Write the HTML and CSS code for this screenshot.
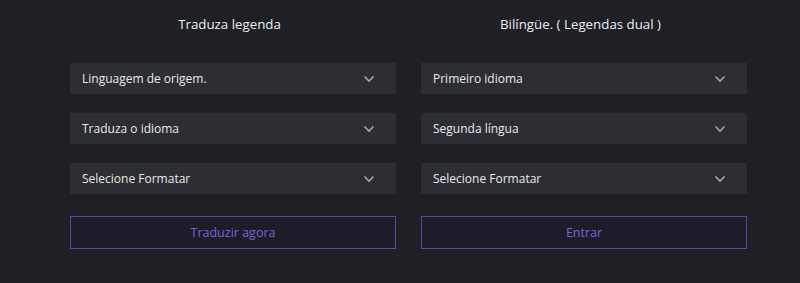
FILE: index.html
```html
<!DOCTYPE html>
<html lang="pt">
<head>
<meta charset="utf-8">
<link rel="stylesheet" href="styles.css">
</head>
<body>
<div class="page">
  <section class="col">
    <h2 class="title">Traduza legenda</h2>
    <div class="select"><span>Linguagem de origem.</span><svg class="chev" viewBox="0 0 12 8"><path d="M1.5 1.5 6 6l4.5-4.5"/></svg></div>
    <div class="select"><span>Traduza o idioma</span><svg class="chev" viewBox="0 0 12 8"><path d="M1.5 1.5 6 6l4.5-4.5"/></svg></div>
    <div class="select"><span>Selecione Formatar</span><svg class="chev" viewBox="0 0 12 8"><path d="M1.5 1.5 6 6l4.5-4.5"/></svg></div>
    <button class="btn">Traduzir agora</button>
  </section>
  <section class="col">
    <h2 class="title">Bilíngüe. ( Legendas dual )</h2>
    <div class="select"><span>Primeiro idioma</span><svg class="chev" viewBox="0 0 12 8"><path d="M1.5 1.5 6 6l4.5-4.5"/></svg></div>
    <div class="select"><span>Segunda língua</span><svg class="chev" viewBox="0 0 12 8"><path d="M1.5 1.5 6 6l4.5-4.5"/></svg></div>
    <div class="select"><span>Selecione Formatar</span><svg class="chev" viewBox="0 0 12 8"><path d="M1.5 1.5 6 6l4.5-4.5"/></svg></div>
    <button class="btn">Entrar</button>
  </section>
</div>
</body>
</html>
```
FILE: styles.css
```css
html, body {
  margin: 0;
  padding: 0;
  background: #1f2025;
  height: 283px;
  overflow: hidden;
}
body {
  font-family: "Open Sans", "Noto Sans", sans-serif;
  color: #e6e6e8;
}
.page {
  display: flex;
  gap: 25px;
  padding: 12px 0 0 70px;
}
.col {
  width: 326px;
  display: flex;
  flex-direction: column;
}
.title {
  margin: 0 0 26px;
  padding-right: 7px;
  height: 25px;
  line-height: 25px;
  font-size: 13.3px;
  font-weight: 400;
  text-align: center;
  color: #ececee;
}
.select {
  height: 31px;
  margin-bottom: 19px;
  background: #2d2e34;
  display: flex;
  align-items: center;
  justify-content: space-between;
  padding: 0 21px 0 12px;
  font-size: 12px;
  color: #e8e8ea;
}
.chev {
  width: 12px;
  height: 8px;
  fill: none;
  stroke: #a6a7ad;
  stroke-width: 1.6;
}
.btn {
  margin-top: 3px;
  height: 33px;
  background: #1d1c28;
  border: 1px solid #5b4aa6;
  color: #7d63d6;
  font-family: inherit;
  font-size: 12.5px;
  padding: 0;
}
```
